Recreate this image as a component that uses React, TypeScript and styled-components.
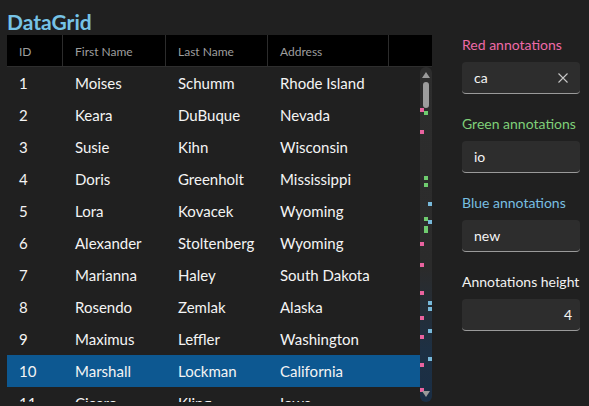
import React from "react";
import styled, { createGlobalStyle } from "styled-components";

const Global = createGlobalStyle`
  html, body { margin: 0; padding: 0; background: #202020; }
  body { font-family: "Segoe UI", Lato, "Noto Sans", sans-serif; color: #f2f2f2; overflow: hidden; }
`;

const Page = styled.div`
  display: flex;
  width: 589px;
  height: 406px;
  padding: 0 0 0 7px;
  box-sizing: border-box;
  overflow: hidden;
`;

const LeftColumn = styled.div`
  display: flex;
  flex-direction: column;
  width: 425px;
  height: 402px;
`;

const Title = styled.h1`
  margin: 0;
  padding-top: 10px;
  height: 35px;
  box-sizing: border-box;
  font-size: 21px;
  line-height: 24px;
  font-weight: 700;
  color: #76c3e6;
`;

const Grid = styled.div`
  position: relative;
  flex: 1;
  display: flex;
  flex-direction: column;
  min-height: 0;
`;

const cols = "56px 103px 102px 121px 43px";

const HeaderRow = styled.div`
  display: grid;
  grid-template-columns: ${cols};
  height: 31px;
  background: #000;
  border-bottom: 1px solid #2e2e2e;
`;

const HeaderCell = styled.div<{ $last?: boolean }>`
  display: flex;
  align-items: center;
  padding: 2px 0 0 12px;
  font-size: 12px;
  color: #9e9e9e;
  border-right: ${(p) => (p.$last ? "none" : "1px solid #2c2c2c")};
`;

const Body = styled.div`
  flex: 1;
  overflow: hidden;
  min-height: 0;
`;

const Row = styled.div<{ $selected?: boolean }>`
  display: grid;
  grid-template-columns: ${cols};
  height: 32px;
  width: 413px;
  background: ${(p) => (p.$selected ? "#0d5891" : "transparent")};
`;

const Cell = styled.div`
  display: flex;
  align-items: center;
  padding-left: 12px;
  font-size: 15px;
  color: #f4f4f4;
  white-space: nowrap;
`;

const ScrollBar = styled.div`
  position: absolute;
  right: 0;
  top: 32px;
  bottom: 0;
  width: 12px;
  border-radius: 6px;
  background: linear-gradient(#2d2d2d 0%, #2b2b2b 60%, #1d3044 85%, #1a2e45 100%);
`;

const Arrow = styled.div<{ $down?: boolean }>`
  position: absolute;
  left: 2px;
  ${(p) => (p.$down ? "bottom: 5px;" : "top: 5px;")}
  width: 0;
  height: 0;
  border-left: 4px solid transparent;
  border-right: 4px solid transparent;
  ${(p) => (p.$down ? "border-top: 6px solid #9a9a9a;" : "border-bottom: 6px solid #9a9a9a;")}
`;

const Thumb = styled.div`
  position: absolute;
  left: 3px;
  top: 15px;
  width: 6px;
  height: 26px;
  border-radius: 3px;
  background: #9d9d9d;
`;

const Mark = styled.div<{ $color: string; $col: number }>`
  position: absolute;
  left: ${(p) => p.$col * 4}px;
  width: 4px;
  height: 4px;
  background: ${(p) => p.$color};
`;

const Panel = styled.div`
  display: flex;
  flex-direction: column;
  margin-left: 30px;
  padding-top: 35px;
  width: 118px;
`;

const Field = styled.div`
  display: flex;
  flex-direction: column;
  margin-bottom: 20px;
`;

const Label = styled.label<{ $color: string }>`
  font-size: 14px;
  line-height: 20px;
  color: ${(p) => p.$color};
  margin-bottom: 7px;
  white-space: nowrap;
`;

const InputBox = styled.div<{ $align?: string }>`
  display: flex;
  align-items: center;
  justify-content: ${(p) => p.$align || "flex-start"};
  height: 31px;
  padding: 0 8px 0 12px;
  background: #2d2d2d;
  border-radius: 4px;
  border-bottom: 1px solid #9a9a9a;
  font-size: 14px;
  color: #f4f4f4;
`;

const Value = styled.span`
  flex: 1;
`;

const ClearIcon = styled.svg`
  width: 10px;
  height: 10px;
  margin-right: 4px;
`;

const rows = [
  ["1", "Moises", "Schumm", "Rhode Island"],
  ["2", "Keara", "DuBuque", "Nevada"],
  ["3", "Susie", "Kihn", "Wisconsin"],
  ["4", "Doris", "Greenholt", "Mississippi"],
  ["5", "Lora", "Kovacek", "Wyoming"],
  ["6", "Alexander", "Stoltenberg", "Wyoming"],
  ["7", "Marianna", "Haley", "South Dakota"],
  ["8", "Rosendo", "Zemlak", "Alaska"],
  ["9", "Maximus", "Leffler", "Washington"],
  ["10", "Marshall", "Lockman", "California"],
  ["11", "Cicero", "Kling", "Iowa"],
];

const PINK = "#e9639f";
const GREEN = "#6fcc6f";
const BLUE = "#78b9da";

const marks: { top: number; color: string; col: number }[] = [
  ...[41, 63, 175, 196, 224, 249, 268, 296, 321].map((t) => ({ top: t, color: PINK, col: 0 })),
  ...[44, 109, 116, 150, 159, 162].map((t) => ({ top: t, color: GREEN, col: 1 })),
  ...[135, 153, 234, 240, 262, 290].map((t) => ({ top: t, color: BLUE, col: 2 })),
];

export default function App() {
  return (
    <>
      <Global />
      <Page>
        <LeftColumn>
          <Title>DataGrid</Title>
          <Grid>
            <HeaderRow>
              <HeaderCell>ID</HeaderCell>
              <HeaderCell>First Name</HeaderCell>
              <HeaderCell>Last Name</HeaderCell>
              <HeaderCell>Address</HeaderCell>
              <HeaderCell $last />
            </HeaderRow>
            <Body>
              {rows.map((r) => (
                <Row key={r[0]} $selected={r[0] === "10"}>
                  {r.map((c, i) => (
                    <Cell key={i}>{c}</Cell>
                  ))}
                </Row>
              ))}
            </Body>
            <ScrollBar>
              <Arrow />
              <Thumb />
              {marks.map((m, i) => (
                <Mark key={i} $color={m.color} $col={m.col} style={{ top: m.top }} />
              ))}
              <Arrow $down />
            </ScrollBar>
          </Grid>
        </LeftColumn>
        <Panel>
          <Field>
            <Label $color="#ee6aa7">Red annotations</Label>
            <InputBox>
              <Value>ca</Value>
              <ClearIcon viewBox="0 0 10 10">
                <path d="M0.5 0.5 L9.5 9.5 M9.5 0.5 L0.5 9.5" stroke="#c8c8c8" strokeWidth="1.1" />
              </ClearIcon>
            </InputBox>
          </Field>
          <Field>
            <Label $color="#7fcf78">Green annotations</Label>
            <InputBox>
              <Value>io</Value>
            </InputBox>
          </Field>
          <Field>
            <Label $color="#78bfe0">Blue annotations</Label>
            <InputBox>
              <Value>new</Value>
            </InputBox>
          </Field>
          <Field>
            <Label $color="#f2f2f2">Annotations height</Label>
            <InputBox $align="flex-end">4</InputBox>
          </Field>
        </Panel>
      </Page>
    </>
  );
}
